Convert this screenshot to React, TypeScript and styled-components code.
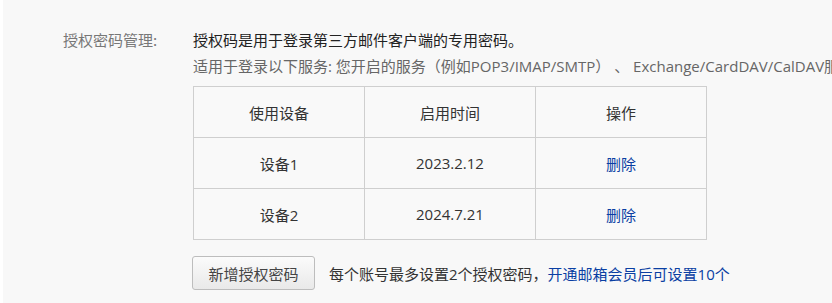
import React from 'react';
import styled, { createGlobalStyle } from 'styled-components';

const GlobalStyle = createGlobalStyle`
	html, body {
		margin: 0;
		padding: 0;
		background: #f8f8f8;
		overflow: hidden;
	}
	body {
		font-family: 'Segoe UI', 'Open Sans', 'Noto Sans CJK SC', sans-serif;
		font-size: 15px;
		color: #333;
	}
`;

const devices = [
	{ name: '设备1', date: '2023.2.12' },
	{ name: '设备2', date: '2024.7.21' },
];

export default function App() {
	return (
		<>
			<GlobalStyle />
			<Page>
				<Row>
					<Label>授权密码管理:</Label>
					<Content>
						<Intro>授权码是用于登录第三方邮件客户端的专用密码。</Intro>
						<Hint>
							适用于登录以下服务: 您开启的服务（例如POP3/IMAP/SMTP） 、 Exchange/CardDAV/CalDAV服务
						</Hint>
						<Table>
							<thead>
								<tr>
									<Th>使用设备</Th>
									<Th>启用时间</Th>
									<Th>操作</Th>
								</tr>
							</thead>
							<tbody>
								{devices.map((d) => (
									<tr key={d.name}>
										<Td>{d.name}</Td>
										<Td>{d.date}</Td>
										<Td>
											<Link>删除</Link>
										</Td>
									</tr>
								))}
							</tbody>
						</Table>
						<Actions>
							<Button>新增授权密码</Button>
							<Note>
								每个账号最多设置2个授权密码，<Link>开通邮箱会员后可设置10个</Link>
							</Note>
						</Actions>
					</Content>
				</Row>
			</Page>
		</>
	);
}

const Page = styled.div`
	width: 832px;
	height: 303px;
	box-sizing: border-box;
	border-left: 3px solid #ffffff;
	background: #f8f8f8;
	padding-top: 27px;
	overflow: hidden;
`;
const Row = styled.div`
	display: flex;
	flex-direction: row;
	align-items: flex-start;
`;
const Label = styled.div`
	width: 157px;
	padding-left: 60px;
	box-sizing: border-box;
	flex-shrink: 0;
	color: #777;
	line-height: 26px;
	white-space: nowrap;
	font-family: 'Noto Sans CJK SC', sans-serif;
`;
const Content = styled.div`
	display: flex;
	flex-direction: column;
	padding-left: 33px;
	min-width: 0;
`;
const Intro = styled.div`
	line-height: 26px;
	color: #222;
	white-space: nowrap;
`;
const Hint = styled.div`
	line-height: 26px;
	color: #666;
	white-space: nowrap;
`;
const Table = styled.table`
	margin-top: 7px;
	width: 514px;
	border-collapse: collapse;
	table-layout: fixed;
	background: #f9f9f9;
`;
const Th = styled.th`
	height: 50px;
	border: 1px solid #cfcfcf;
	font-weight: 400;
	color: #333;
	text-align: center;
	padding: 0;
`;
const Td = styled.td`
	height: 50px;
	border: 1px solid #cfcfcf;
	color: #333;
	text-align: center;
	padding: 0;
`;
const Link = styled.span`
	color: #0a3fa3;
	cursor: pointer;
`;
const Actions = styled.div`
	display: flex;
	flex-direction: row;
	align-items: center;
	margin-top: 16px;
	margin-left: -1px;
	gap: 14px;
`;
const Button = styled.button`
	height: 34px;
	width: 123px;
	border: 1px solid #bdbdbd;
	border-radius: 3px;
	background: linear-gradient(#fbfbfb, #e9e9e9);
	color: #444;
	font-family: inherit;
	font-size: 15px;
	padding: 0;
`;
const Note = styled.div`
	color: #333;
	white-space: nowrap;
`;
